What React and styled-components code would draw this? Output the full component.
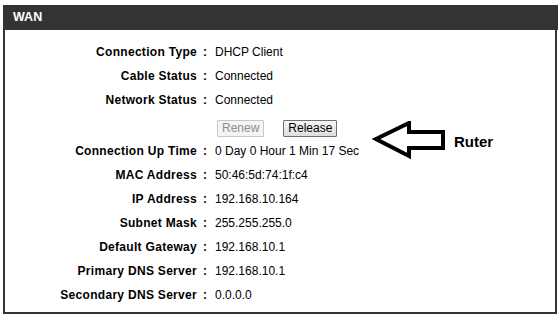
import React from "react";
import styled, { createGlobalStyle } from "styled-components";

const rows = [
  ["Connection Type", "DHCP Client"],
  ["Cable Status", "Connected"],
  ["Network Status", "Connected"],
];

const rowsAfter = [
  ["Connection Up Time", "0 Day 0 Hour 1 Min 17 Sec"],
  ["MAC Address", "50:46:5d:74:1f:c4"],
  ["IP Address", "192.168.10.164"],
  ["Subnet Mask", "255.255.255.0"],
  ["Default Gateway", "192.168.10.1"],
  ["Primary DNS Server", "192.168.10.1"],
  ["Secondary DNS Server", "0.0.0.0"],
];

const Row = ({ label, value }) => (
  <Line>
    <Label>{label}</Label>
    <Colon>:</Colon>
    <Value>{value}</Value>
  </Line>
);

const App = () => {
  return (
    <Page>
      <GlobalStyle />
      <Header>WAN</Header>
      <Panel>
        {rows.map(([l, v]) => (
          <Row key={l} label={l} value={v} />
        ))}
        <ButtonLine>
          <span />
          <span />
          <Buttons>
            <Button disabled>Renew</Button>
            <Button>Release</Button>
          </Buttons>
        </ButtonLine>
        {rowsAfter.map(([l, v]) => (
          <Row key={l} label={l} value={v} />
        ))}
        <Note>
          <svg width="74" height="40" viewBox="0 0 74 40">
            <polygon
              points="4,18 37,2 37,11 71,11 71,27 37,27 37,35"
              fill="none"
              stroke="#000"
              strokeWidth="4"
              strokeLinejoin="miter"
            />
          </svg>
          <NoteText>Ruter</NoteText>
        </Note>
      </Panel>
    </Page>
  );
};

export default App;

const GlobalStyle = createGlobalStyle`
  body {
    margin: 0;
    background: #fff;
    font-family: "Liberation Sans", Arial, sans-serif;
  }
`;

const Page = styled.div`
  padding: 5px 0 0 3px;
  width: 555px;
`;

const Header = styled.div`
  height: 25px;
  background: #333333;
  color: #fff;
  font-weight: bold;
  font-size: 12.5px;
  line-height: 25px;
  padding-left: 10px;
`;

const Panel = styled.div`
  position: relative;
  width: 550px;
  border: 2px solid #333;
  border-top: none;
  padding: 10px 0 5px;
`;

const Line = styled.div`
  display: grid;
  grid-template-columns: 192px 16px 1fr;
  height: 24px;
  align-items: center;
  font-size: 12px;
  color: #000;
`;

const Label = styled.div`
  text-align: right;
  font-weight: bold;
  letter-spacing: 0.3px;
`;

const Colon = styled.div`
  text-align: center;
  font-weight: bold;
`;

const Value = styled.div`
  padding-left: 2px;
`;

const ButtonLine = styled(Line)`
  height: 27px;
  align-items: end;
  padding-bottom: 2px;
  box-sizing: border-box;
`;

const Buttons = styled.div`
  display: flex;
  gap: 19px;
  padding-left: 4px;
`;

const Button = styled.button`
  font-family: "Liberation Sans", Arial, sans-serif;
  font-size: 12px;
  height: 17px;
  padding: 0 4px;
  color: #000;
  background: linear-gradient(#f6f6f6, #dedede);
  border: 1px solid #707070;
  border-radius: 1px;
  line-height: 15px;

  &:disabled {
    color: #8d8d8d;
    background: #f4f4f4;
    border-color: #c8c8c8;
  }
`;

const Note = styled.div`
  position: absolute;
  left: 367px;
  top: 91px;
  display: flex;
  align-items: center;
  gap: 8px;
`;

const NoteText = styled.span`
  font-weight: bold;
  font-size: 15px;
  color: #000;
`;
